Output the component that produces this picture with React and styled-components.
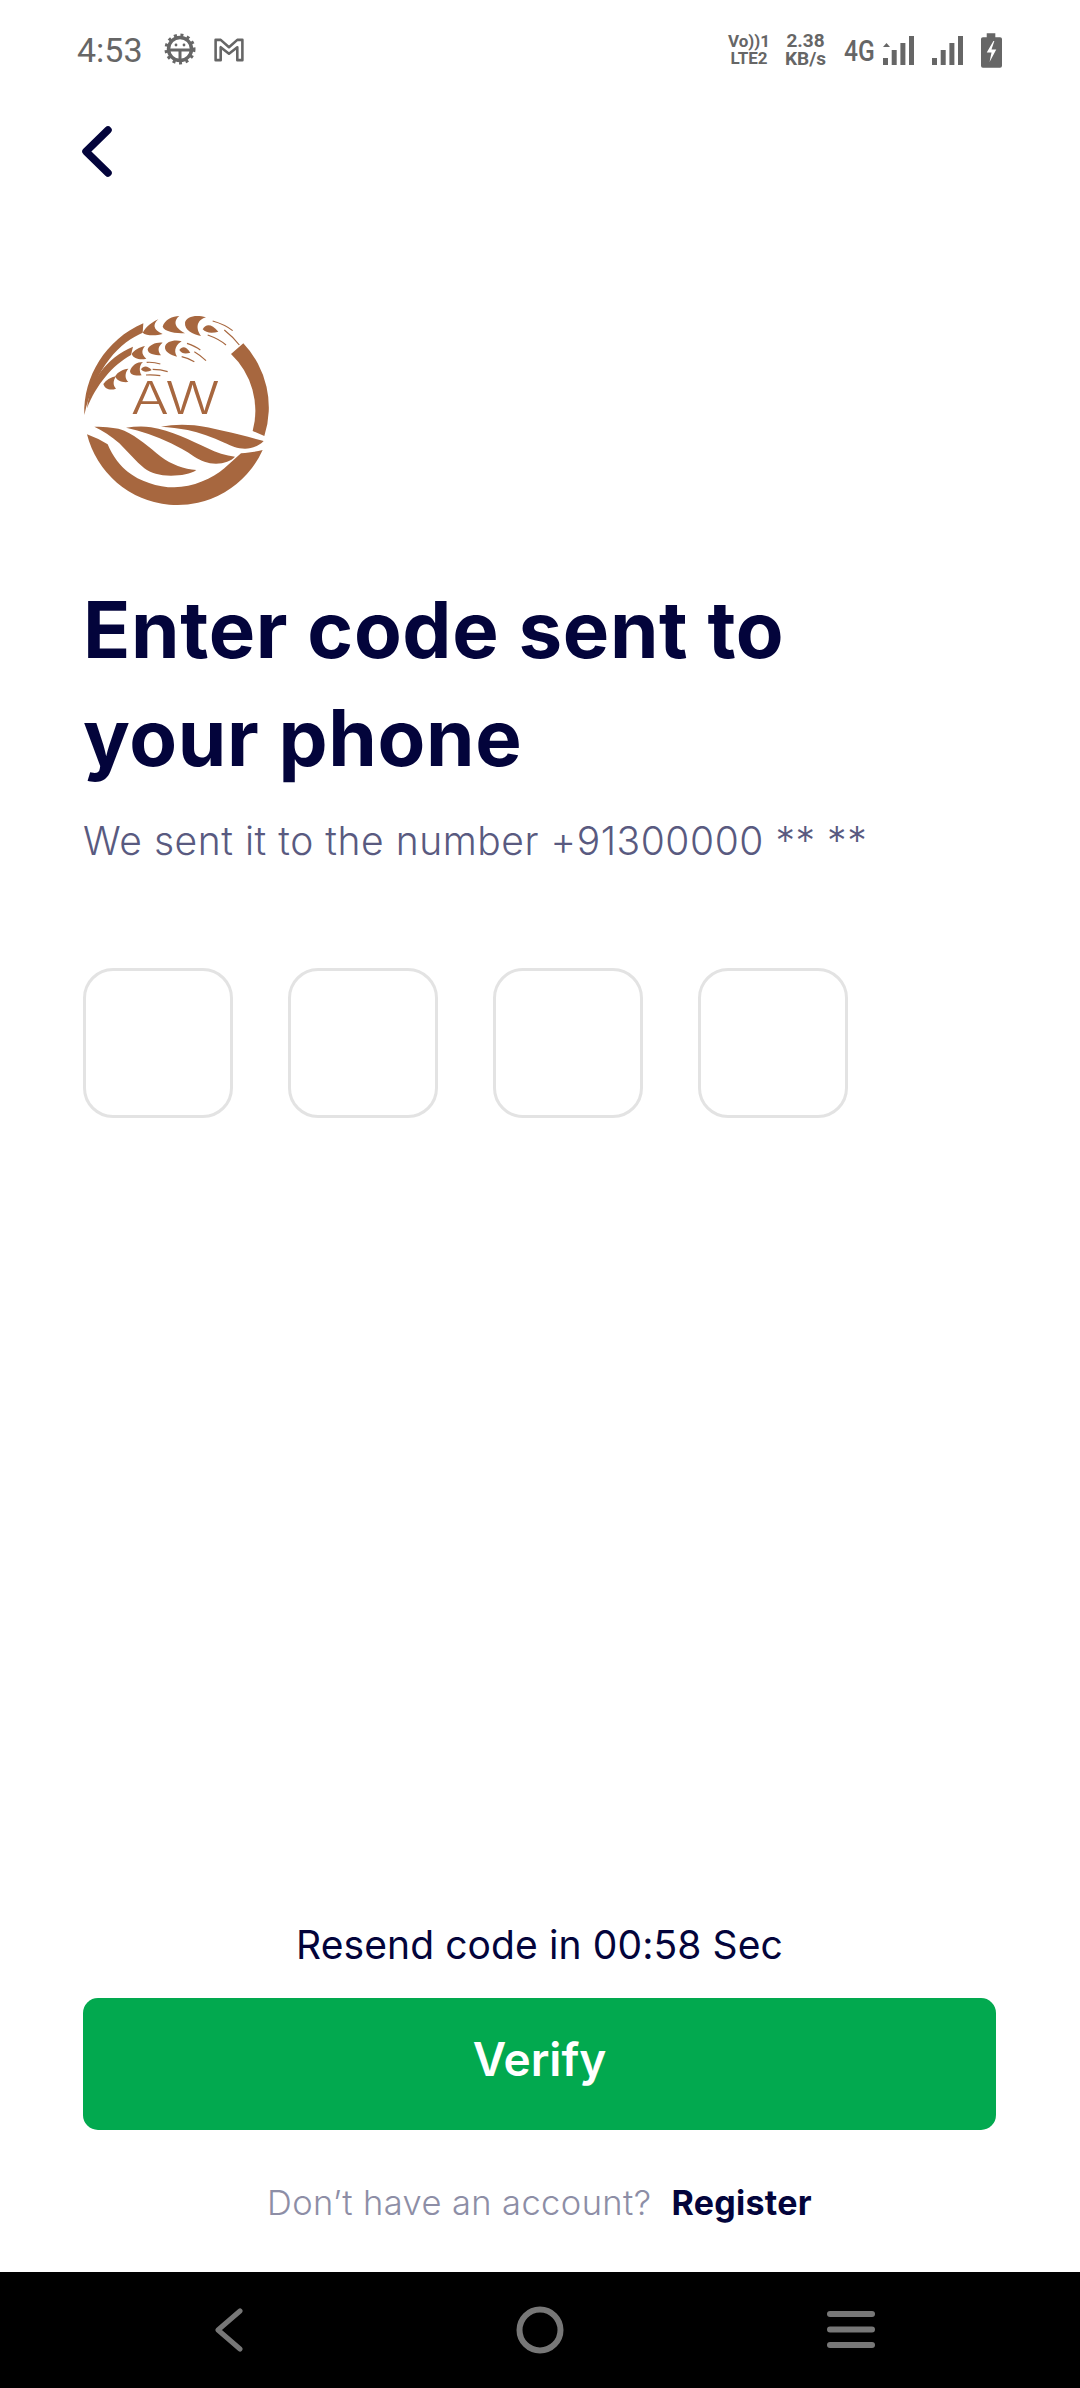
import React from "react";
import styled, { createGlobalStyle } from "styled-components";

const Global = createGlobalStyle`
  html, body { margin: 0; padding: 0; background: #fff; }
  * { box-sizing: border-box; }
`;
const Page = styled.div`
  width: 1080px; height: 2388px; display: flex; flex-direction: column;
  background: #fff; font-family: "Inter", "Liberation Sans", sans-serif; overflow: hidden;
`;
const StatusBar = styled.div`
  height: 100px; flex: none; display: flex; align-items: center; justify-content: space-between;
  padding: 0 78px 0 77px; color: #666;
`;
const StatusGroup = styled.div`display: flex; align-items: center;`;
const Time = styled.span`font: 400 34px Roboto, sans-serif; margin-right: 21px;`;
const GearIcon = styled.svg`margin-right: 18px; margin-top: -2px;`;
const Tiny = styled.span`
  font: 700 ${p => p.$size || 17}px/${p => p.$lh || 17}px Roboto, sans-serif; text-align: center; white-space: pre-line;
  display: block; margin-left: ${p => p.$ml || 0}px;
`;
const FourG = styled.span`
  font: 500 30px Roboto, sans-serif; transform: scaleX(.82); transform-origin: left center; width: 29px; margin-left: 18px;
`;
const SignalIcon = styled.svg`margin-left: ${p => p.$ml}px;`;
const Main = styled.main`
  flex: 1; display: flex; flex-direction: column; padding: 0 84px 0 83px;
`;
const BackBtn = styled.div`height: 56px; margin: 24px 0 0 -1px; display: flex; align-items: center;`;
const Logo = styled.svg`display: block; margin-top: 134px; width: 190px; height: 193px;`;
const Title = styled.h1`
  margin: 69px 0 0; font: 650 78px/108px "Inter", sans-serif; color: #03043b; letter-spacing: .65px;
`;
const Sub = styled.p`
  margin: 22px 0 0; font: 300 39px/54px "Inter", sans-serif; color: #595a80; letter-spacing: .55px;
`;
const Codes = styled.div`display: flex; gap: 55px; margin-top: 100px;`;
const CodeBox = styled.div`
  width: 150px; height: 150px; border: 3px solid #e3e3e3; border-radius: 30px; background: #fff;
`;
const Spacer = styled.div`flex: 1;`;
const Resend = styled.div`
  text-align: center; font: 400 39px/54px "Inter", sans-serif; color: #03043b; letter-spacing: .1px;
`;
const VerifyBtn = styled.button`
  margin-top: 26px; height: 132px; width: 100%; border: 0; border-radius: 15px; background: #02a94f;
  color: #fff; font: 600 46px "Inter", sans-serif; padding: 0 0 10px;
`;
const Footer = styled.div`
  display: flex; justify-content: center; align-items: center; gap: 20px; margin: 45px 0 43px; height: 54px;
  font: 300 34.5px "Inter", sans-serif; color: #8d8ea6; letter-spacing: .4px;
`;
const Link = styled.span`font: 700 34px "Inter", sans-serif; color: #03043b; letter-spacing: .3px;`;
const NavBar = styled.nav`
  height: 116px; flex: none; background: #000; display: grid; grid-template-columns: repeat(3, 311px);
  justify-content: center; align-items: center; justify-items: center;
`;

const LogoMark = () => (
  <Logo viewBox="36 42 570 579" fill="#a7673f">
    <path d="M480 162 L517 130 A280 280 0 0 1 580 408 L545 393 A235 235 0 0 0 480 162Z" />
    <path d="M48 403 L82 417 L110 433 C125 470 150 500 170 515 C205 543 260 562 310 562 C365 562 425 535 460 505 L510 460 C535 458 555 455 575 450 A280 280 0 0 1 48 403Z" />
    <path d="M40 345 C36 230 105 118 217 70 L215 98 C150 125 72 200 40 345Z" />
    <path d="M48 325 C58 240 105 175 186 140 L180 165 C125 195 75 255 48 325Z" />
    <path d="M215 98 C225 80 245 65 262 58 C245 72 245 90 275 102 C255 108 225 108 215 98Z" />
    <path d="M275 80 C280 60 305 48 325 48 C310 60 305 80 342 100 C315 100 280 95 275 80Z" />
    <path d="M342 68 C345 50 375 42 405 52 C382 58 370 80 390 108 C365 102 340 90 342 68Z" />
    <path d="M395 88 C405 72 420 70 442 95 C425 100 405 100 395 88Z" />
    <path d="M182 162 C190 150 205 142 222 138 C212 150 210 162 226 176 C210 180 188 178 182 162Z" />
    <path d="M230 148 C235 135 255 126 275 128 C262 138 258 150 270 166 C250 166 230 162 230 148Z" />
    <path d="M282 140 C285 125 310 118 332 124 C318 132 305 150 318 170 C300 165 280 155 282 140Z" />
    <path d="M325 150 C335 137 345 140 358 158 C345 162 332 162 325 150Z" />
    <path d="M97 252 C105 240 118 232 136 228 C125 243 126 256 135 266 C118 272 102 268 97 252Z" />
    <path d="M133 228 C140 216 155 208 172 206 C160 220 162 236 172 246 C152 248 136 242 133 228Z" />
    <path d="M177 213 C182 196 198 186 216 186 C204 196 204 214 212 226 C194 228 178 226 177 213Z" />
    <path d="M210 208 C218 196 230 197 242 210 C232 216 216 218 210 208Z" />
    <g fill="none" stroke="#a7673f" strokeWidth="3.5">
      <path d="M425 63 C450 70 470 80 485 92" />
      <path d="M410 105 C430 112 450 122 465 135" />
      <path d="M460 90 C475 102 492 118 505 135" />
      <path d="M348 130 C365 136 378 142 388 150" />
      <path d="M332 170 C345 173 358 178 370 185" />
      <path d="M370 155 C382 162 395 172 405 182" />
      <path d="M227 187 C242 186 256 188 268 192" />
      <path d="M245 208 C260 208 278 211 290 215" />
      <path d="M225 225 C240 224 255 225 268 227" />
    </g>
    <path d="M70 380 C105 380 140 383 160 392 C200 410 235 442 270 470 C300 493 340 507 376 510 C360 522 330 527 300 527 C265 527 240 520 220 505 C195 485 170 455 145 430 C120 408 95 392 70 380Z" />
    <path d="M165 383 C190 380 215 378 240 382 C300 392 360 422 410 445 C435 458 465 467 492 470 C480 483 460 490 435 491 C410 491 390 482 370 470 C345 453 320 440 300 430 C255 408 210 393 165 383Z" />
    <path d="M270 380 C300 374 335 372 370 376 C430 384 510 405 578 423 C565 437 545 445 522 446 C500 446 480 437 460 428 C425 411 385 398 350 390 C325 385 295 382 270 380Z" />
    <text x="180" y="343" fontFamily="Inter, sans-serif" fontWeight="350" fontSize="137" textLength="266" lengthAdjust="spacingAndGlyphs" fill="#a7673f">AW</text>
  </Logo>
);

const Signal = ({ ml, arrow }) => (
  <SignalIcon $ml={ml} width="31" height="29" viewBox="0 0 31 29" fill="#666">
    <path d="M0 22h5v7H0zM8.7 14h5v15h-5zM17.4 7h5v22h-5zM26 0h5v29h-5z" />
    {arrow && <path d="M0 11 L3.5 7 L7 11Z" />}
  </SignalIcon>
);

export default function App() {
  return (
    <Page>
      <Global />
      <StatusBar>
        <StatusGroup>
          <Time>4:53</Time>
          <GearIcon width="32" height="32" viewBox="0 0 32 32" fill="none" stroke="#666">
            <circle cx="16" cy="16" r="11.5" strokeWidth="3.5" />
            <circle cx="16" cy="16" r="14" strokeWidth="3" strokeDasharray="3 3.6" />
            <path d="M5 17H27M16 17V27" strokeWidth="3" />
            <circle cx="12" cy="12" r="1.4" fill="#666" stroke="none" />
            <circle cx="20" cy="12" r="1.4" fill="#666" stroke="none" />
          </GearIcon>
          <svg width="30" height="24" viewBox="0 0 32 26" fill="none" stroke="#666" strokeWidth="2.8" strokeLinejoin="round">
            <path d="M1.5 2H7L16 10L25 2H30.5V24H25V10L16 17L7 10V24H1.5Z" />
          </svg>
        </StatusGroup>
        <StatusGroup>
          <Tiny>{"Vo))1\nLTE2"}</Tiny>
          <Tiny $size={19} $lh={18} $ml={15}>{"2.38\nKB/s"}</Tiny>
          <FourG>4G</FourG>
          <Signal ml={10} arrow />
          <Signal ml={18} />
          <SignalIcon $ml={18} width="21" height="37" viewBox="0 0 22 36">
            <path fill="#666" d="M6 0h9v4h5a2 2 0 0 1 2 2v28a2 2 0 0 1-2 2H2a2 2 0 0 1-2-2V6a2 2 0 0 1 2-2h4z" />
            <path fill="#fff" d="M13 8 6 20h5l-2 10 7-13h-5l3-9z" />
          </SignalIcon>
        </StatusGroup>
      </StatusBar>
      <Main>
        <BackBtn>
          <svg width="30" height="52" viewBox="0 0 30 52" fill="none" stroke="#03043b" strokeWidth="7.5" strokeLinecap="round" strokeLinejoin="round">
            <path d="M26 4 4 25.5 26 47" />
          </svg>
        </BackBtn>
        <LogoMark />
        <Title>Enter code sent to<br />your phone</Title>
        <Sub>We sent it to the number +91300000 ** **</Sub>
        <Codes>
          <CodeBox /><CodeBox /><CodeBox /><CodeBox />
        </Codes>
        <Spacer />
        <Resend>Resend code in 00:58 Sec</Resend>
        <VerifyBtn>Verify</VerifyBtn>
        <Footer>
          <span>Don’t have an account?</span>
          <Link>Register</Link>
        </Footer>
      </Main>
      <NavBar>
        <svg width="30" height="44" viewBox="0 0 30 44" fill="none" stroke="#777" strokeWidth="5" strokeLinecap="round" strokeLinejoin="round">
          <path d="M26 3 4 22 26 41" />
        </svg>
        <svg width="48" height="48" viewBox="0 0 48 48" fill="none" stroke="#777" strokeWidth="6">
          <circle cx="24" cy="24" r="20.5" />
        </svg>
        <svg width="48" height="38" viewBox="0 0 48 38" fill="#777">
          <rect x="0" y="0" width="48" height="6" rx="3" />
          <rect x="0" y="15.5" width="48" height="6" rx="3" />
          <rect x="0" y="31" width="48" height="6" rx="3" />
        </svg>
      </NavBar>
    </Page>
  );
}
